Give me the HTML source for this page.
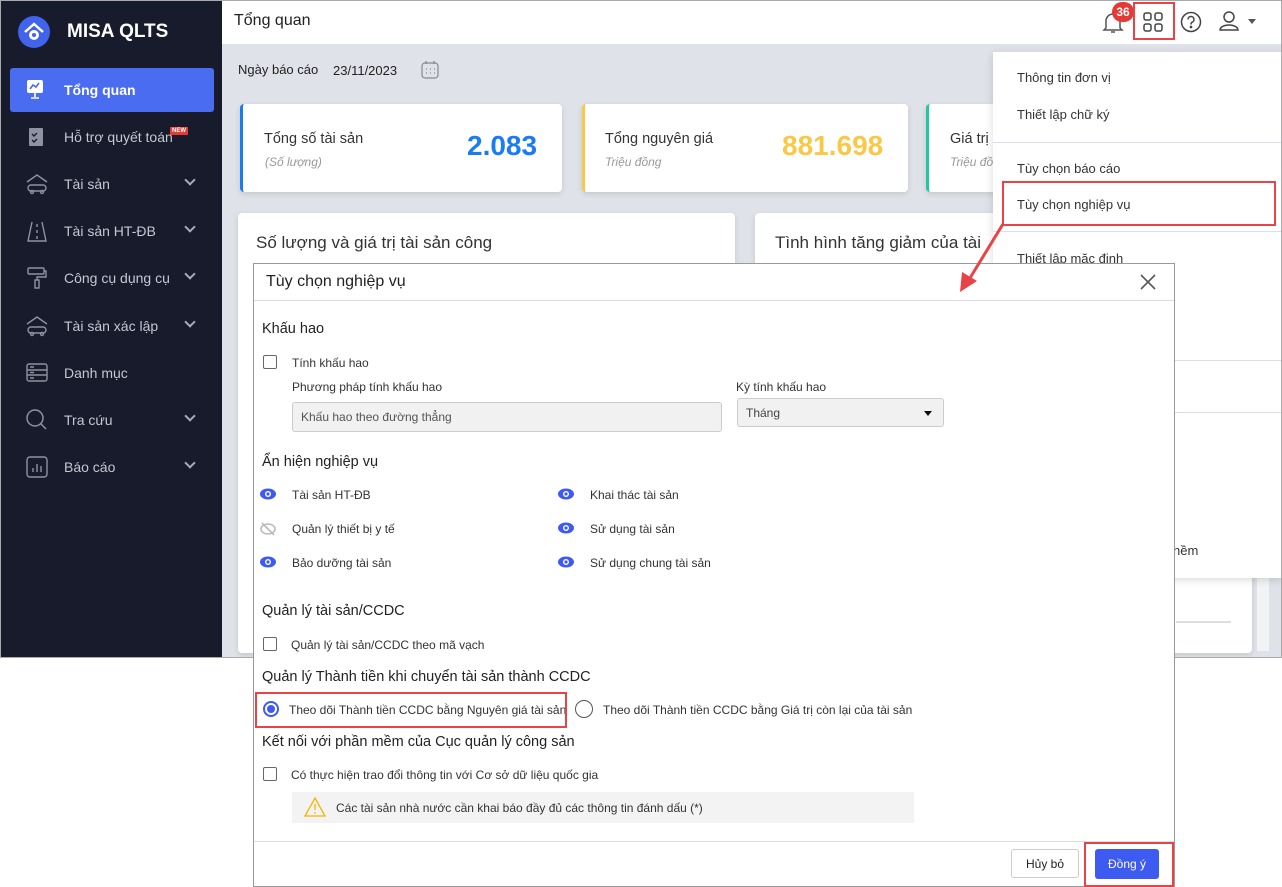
<!DOCTYPE html>
<html><head><meta charset="utf-8"><style>
*{box-sizing:border-box;margin:0;padding:0}
body{width:1282px;height:887px;background:#fff;font-family:"Liberation Sans",sans-serif;position:relative;overflow:hidden;color:#222}
.a{position:absolute}
#frame{left:0;top:0;width:1282px;height:658px;border:1px solid #aaa;background:#dfe2e8;overflow:hidden}
#side{left:0;top:0;width:221px;height:657px;background:#171b2b}
.ni{position:absolute;left:9px;width:204px;height:44px;color:#c5c8d0;font-size:14px}
.ni span{position:absolute;left:54px;top:14px}
.ni svg{position:absolute;left:15px;top:10px}
.ni .chev{position:absolute;left:176px;top:14px;width:8px;height:8px;border-right:2px solid #aab;border-bottom:2px solid #aab;transform:rotate(45deg)}
.card{background:#fff;border-radius:4px;box-shadow:0 2px 6px rgba(0,0,0,.12)}
.mi{position:absolute;left:24px;font-size:13px;color:#333}
.sep{position:absolute;left:0;width:290px;height:1px;background:#dde}
.dlg{left:253px;top:263px;width:922px;height:624px;background:#fff;border:1px solid #999}
.h{position:absolute;left:8px;font-size:14.5px;color:#222}
.t{position:absolute;font-size:12px;color:#333}
.cb{position:absolute;width:14px;height:14px;border:1px solid #666;border-radius:2px;background:#fff}
.red{position:absolute;border:2px solid #e84347}
</style></head><body>
<div id="frame" class="a">
 <div id="side" class="a">
  <svg class="a" style="left:16px;top:14px" width="34" height="34" viewBox="0 0 34 34"><circle cx="17" cy="17" r="16" fill="#4263eb"/><path d="M8 17 L17 9 L26 17" stroke="#fff" stroke-width="2.5" fill="none"/><circle cx="17" cy="20" r="5" fill="#fff"/><circle cx="17" cy="20" r="2" fill="#4263eb"/></svg>
  <div class="a" style="left:66px;top:20px;color:#fff;font-weight:bold;font-size:19px">MISA QLTS</div>
  <div class="ni" style="top:67px;background:#4a6cf0;border-radius:3px;color:#fff;font-weight:bold"><svg width="22" height="22" viewBox="0 0 22 22"><rect x="2" y="2" width="16" height="13" rx="2" fill="#fff"/><path d="M5 11 L8 7 L11 9 L14 5" stroke="#4a6cf0" stroke-width="1.6" fill="none"/><path d="M10 15v4M6 20h8" stroke="#fff" stroke-width="1.6"/></svg><span>Tổng quan</span></div>
  <div class="ni" style="top:114px"><svg width="22" height="22" viewBox="0 0 22 22"><rect x="4" y="3" width="14" height="18" rx="1" fill="#8d93a0"/><path d="M7 9l2 2 3-3M7 15l2 2 3-3" stroke="#171b2b" stroke-width="1.4" fill="none"/></svg><span>Hỗ trợ quyết toán</span><div class="a" style="left:160px;top:12px;background:#e53935;color:#fff;font-size:6px;padding:1px 2px;font-weight:bold">NEW</div></div>
  <div class="ni" style="top:161px"><svg width="24" height="24" viewBox="0 0 24 24" fill="none" stroke="#8d93a0" stroke-width="1.4"><path d="M2 10 L12 3 L22 10"/><rect x="3" y="13" width="18" height="6" rx="3"/><circle cx="7" cy="20" r="1.5"/><circle cx="17" cy="20" r="1.5"/></svg><span>Tài sản</span><i class="chev"></i></div>
  <div class="ni" style="top:208px"><svg width="24" height="24" viewBox="0 0 24 24" fill="none" stroke="#8d93a0" stroke-width="1.4"><path d="M7 3 L3 22 H21 L17 3M12 5v3M12 11v3M12 17v3"/></svg><span>Tài sản HT-ĐB</span><i class="chev"></i></div>
  <div class="ni" style="top:255px"><svg width="24" height="24" viewBox="0 0 24 24" fill="none" stroke="#8d93a0" stroke-width="1.4"><rect x="3" y="2" width="16" height="6" rx="1"/><path d="M19 5h2v6h-9v3"/><rect x="10" y="14" width="4" height="8"/></svg><span>Công cụ dụng cụ</span><i class="chev"></i></div>
  <div class="ni" style="top:303px"><svg width="24" height="24" viewBox="0 0 24 24" fill="none" stroke="#8d93a0" stroke-width="1.4"><path d="M2 10 L12 3 L22 10"/><rect x="3" y="13" width="18" height="6" rx="3"/><circle cx="7" cy="20" r="1.5"/><circle cx="17" cy="20" r="1.5"/></svg><span>Tài sản xác lập</span><i class="chev"></i></div>
  <div class="ni" style="top:350px"><svg width="24" height="24" viewBox="0 0 24 24" fill="none" stroke="#8d93a0" stroke-width="1.4"><rect x="2" y="3" width="20" height="17" rx="2"/><path d="M2 9h20M2 14h20M5 6h4M5 11.5h4M5 17h4"/></svg><span>Danh mục</span></div>
  <div class="ni" style="top:397px"><svg width="24" height="24" viewBox="0 0 24 24" fill="none" stroke="#8d93a0" stroke-width="1.5"><circle cx="10" cy="10" r="8"/><path d="M16 16l5 5"/></svg><span>Tra cứu</span><i class="chev"></i></div>
  <div class="ni" style="top:444px"><svg width="24" height="24" viewBox="0 0 24 24" fill="none" stroke="#8d93a0" stroke-width="1.4"><rect x="2" y="2" width="20" height="20" rx="3"/><path d="M8 17v-4M12 17v-8M16 17v-6"/></svg><span>Báo cáo</span><i class="chev"></i></div>
 </div>
 <div class="a" style="left:221px;top:0;width:1060px;height:43px;background:#fff"></div>
 <div class="a" style="left:233px;top:11px;font-size:16px;color:#222">Tổng quan</div>
 <svg class="a" style="left:1101px;top:10px" width="22" height="24" viewBox="0 0 22 24" fill="none" stroke="#555" stroke-width="1.5"><path d="M4 17V10a7 7 0 0 1 14 0v7l2 2H2z M9 21h4"/></svg>
 <div class="a" style="left:1111px;top:1px;width:22px;height:20px;border-radius:10px;background:#e53935;color:#fff;font-size:12px;font-weight:bold;text-align:center;line-height:20px">36</div>
 <svg class="a" style="left:1142px;top:11px" width="20" height="20" viewBox="0 0 20 20" fill="none" stroke="#444" stroke-width="1.5"><rect x="1" y="1" width="7" height="7" rx="2"/><rect x="12" y="1" width="7" height="7" rx="2"/><rect x="1" y="12" width="7" height="7" rx="2"/><rect x="12" y="12" width="7" height="7" rx="2"/></svg>
 <div class="red" style="left:1132px;top:1px;width:42px;height:38px"></div>
 <svg class="a" style="left:1179px;top:10px" width="22" height="22" viewBox="0 0 22 22" fill="none" stroke="#444" stroke-width="1.5"><circle cx="11" cy="11" r="9.5"/><path d="M8 8.5a3 3 0 1 1 4 2.8c-1 .4-1 1-1 2.2"/><circle cx="11" cy="16" r=".6" fill="#444"/></svg>
 <svg class="a" style="left:1217px;top:9px" width="22" height="22" viewBox="0 0 22 22" fill="none" stroke="#444" stroke-width="1.5"><circle cx="11" cy="7" r="5"/><path d="M2 20a9 5 0 0 1 18 0z"/></svg>
 <div class="a" style="left:1247px;top:18px;border:4px solid transparent;border-top:5px solid #555"></div>
 <div class="a" style="left:237px;top:61px;font-size:13px">Ngày báo cáo</div>
 <div class="a" style="left:332px;top:62px;font-size:13px">23/11/2023</div>
 <svg class="a" style="left:419px;top:59px" width="20" height="20" viewBox="0 0 20 20" fill="none" stroke="#888" stroke-width="1.2"><rect x="2" y="3" width="16" height="15" rx="3"/><path d="M6 1v3M14 1v3M6 9h1M10 9h1M14 9h1M6 13h1M10 13h1M14 13h1"/></svg>
 <div class="a card" style="left:239px;top:103px;width:322px;height:88px;border-left:3px solid #1a7cf5"></div>
 <div class="a" style="left:263px;top:130px;font-size:14.5px;color:#333">Tổng số tài sản</div>
 <div class="a" style="left:264px;top:154px;font-size:12px;color:#999;font-style:italic">(Số lượng)</div>
 <div class="a" style="left:466px;top:129px;font-size:28px;font-weight:bold;color:#1a7cf5">2.083</div>
 <div class="a card" style="left:581px;top:103px;width:326px;height:88px;border-left:3px solid #f9c847"></div>
 <div class="a" style="left:604px;top:130px;font-size:14.5px;color:#333">Tổng nguyên giá</div>
 <div class="a" style="left:604px;top:154px;font-size:12px;color:#999;font-style:italic">Triệu đồng</div>
 <div class="a" style="left:781px;top:129px;font-size:28px;font-weight:bold;color:#f9c847">881.698</div>
 <div class="a card" style="left:925px;top:103px;width:200px;height:88px;border-left:3px solid #1ec8a0"></div>
 <div class="a" style="left:949px;top:130px;font-size:14.5px;color:#333">Giá trị</div>
 <div class="a" style="left:949px;top:154px;font-size:12px;color:#999;font-style:italic">Triệu đồ</div>
 <div class="a card" style="left:237px;top:212px;width:497px;height:440px"></div>
 <div class="a" style="left:255px;top:232px;font-size:17px;color:#333">Số lượng và giá trị tài sản công</div>
 <div class="a card" style="left:754px;top:212px;width:497px;height:440px"></div>
 <div class="a" style="left:774px;top:232px;font-size:17px;color:#333">Tình hình tăng giảm của tài</div>
 <div class="a" style="left:1175px;top:620px;width:55px;height:2px;background:#ddd"></div>
 <div class="a" style="left:1256px;top:230px;width:12px;height:420px;background:#f2f3f5"></div>
 <div class="a" style="left:992px;top:51px;width:290px;height:526px;background:#fff;box-shadow:0 2px 8px rgba(0,0,0,.15)">
  <div class="mi" style="top:18px">Thông tin đơn vị</div>
  <div class="mi" style="top:55px">Thiết lập chữ ký</div>
  <div class="sep" style="top:90px"></div>
  <div class="sep" style="top:179px"></div>
  <div class="mi" style="top:109px">Tùy chọn báo cáo</div>
  <div class="mi" style="top:145px">Tùy chọn nghiệp vụ</div>
  <div class="mi" style="top:199px">Thiết lập mặc định</div>
  <div class="sep" style="top:308px"></div>
  <div class="sep" style="top:360px"></div>
  <div class="mi" style="top:491px;left:180px">hềm</div>
 </div>
 <div class="red" style="left:1001px;top:180px;width:274px;height:45px"></div>
</div>
<div class="a dlg">
 <div class="a" style="left:12px;top:9px;font-size:16px;color:#222">Tùy chọn nghiệp vụ</div>
 <svg class="a" style="left:886px;top:10px" width="16" height="16" viewBox="0 0 16 16" stroke="#555" stroke-width="1.6"><path d="M1 1L15 15M15 1L1 15"/></svg>
 <div class="a" style="left:0;top:36px;width:920px;height:1px;background:#ddd"></div>
 <div class="h" style="top:57px">Khấu hao</div>
 <div class="cb" style="left:9px;top:91px"></div><div class="t" style="left:38px;top:92px">Tính khấu hao</div>
 <div class="t" style="left:38px;top:116px">Phương pháp tính khấu hao</div>
 <div class="a" style="left:38px;top:138px;width:430px;height:30px;background:#f1f1f1;border:1px solid #ccc;border-radius:3px;font-size:12px;color:#555;padding:7px 8px">Khấu hao theo đường thẳng</div>
 <div class="t" style="left:482px;top:116px">Kỳ tính khấu hao</div>
 <div class="a" style="left:483px;top:134px;width:207px;height:29px;background:#f1f1f1;border:1px solid #ccc;border-radius:3px;font-size:12px;color:#444;padding:7px 8px">Tháng</div>
 <div class="a" style="left:670px;top:147px;border:4px solid transparent;border-top:5px solid #111"></div>
 <div class="h" style="top:190px">Ẩn hiện nghiệp vụ</div>
 <svg width="0" height="0" style="position:absolute"><defs><g id="eye"><ellipse cx="8" cy="6" rx="8" ry="5.5" fill="#3d5af1"/><circle cx="8" cy="6" r="3" fill="#fff"/><circle cx="8" cy="6" r="1.6" fill="#3d5af1"/></g></defs></svg>
 <svg class="a" style="left:6px;top:224px" width="16" height="12"><use href="#eye"/></svg><div class="t" style="left:38px;top:224px">Tài sản HT-ĐB</div>
 <svg class="a" style="left:6px;top:258px" width="16" height="14" viewBox="0 0 16 14" fill="none" stroke="#bbb" stroke-width="1.6"><ellipse cx="8" cy="7" rx="7" ry="5"/><path d="M2 1L14 13"/></svg><div class="t" style="left:38px;top:258px">Quản lý thiết bị y tế</div>
 <svg class="a" style="left:6px;top:292px" width="16" height="12"><use href="#eye"/></svg><div class="t" style="left:38px;top:292px">Bảo dưỡng tài sản</div>
 <svg class="a" style="left:304px;top:224px" width="16" height="12"><use href="#eye"/></svg><div class="t" style="left:336px;top:224px">Khai thác tài sản</div>
 <svg class="a" style="left:304px;top:258px" width="16" height="12"><use href="#eye"/></svg><div class="t" style="left:336px;top:258px">Sử dụng tài sản</div>
 <svg class="a" style="left:304px;top:292px" width="16" height="12"><use href="#eye"/></svg><div class="t" style="left:336px;top:292px">Sử dụng chung tài sản</div>
 <div class="h" style="top:339px">Quản lý tài sản/CCDC</div>
 <div class="cb" style="left:9px;top:373px"></div><div class="t" style="left:37px;top:374px">Quản lý tài sản/CCDC theo mã vạch</div>
 <div class="h" style="top:405px">Quản lý Thành tiền khi chuyển tài sản thành CCDC</div>
 <div class="a" style="left:9px;top:437px;width:16px;height:16px;border-radius:50%;border:2px solid #3d5af1"><div class="a" style="left:2px;top:2px;width:8px;height:8px;border-radius:50%;background:#3d5af1"></div></div>
 <div class="t" style="left:35px;top:439px">Theo dõi Thành tiền CCDC bằng Nguyên giá tài sản</div>
 <div class="red" style="left:1px;top:428px;width:312px;height:36px"></div>
 <div class="a" style="left:321px;top:436px;width:18px;height:18px;border-radius:50%;border:1.5px solid #555"></div>
 <div class="t" style="left:349px;top:439px">Theo dõi Thành tiền CCDC bằng Giá trị còn lại của tài sản</div>
 <div class="h" style="top:470px">Kết nối với phần mềm của Cục quản lý công sản</div>
 <div class="cb" style="left:9px;top:503px"></div><div class="t" style="left:37px;top:504px">Có thực hiện trao đổi thông tin với Cơ sở dữ liệu quốc gia</div>
 <div class="a" style="left:38px;top:528px;width:622px;height:31px;background:#f3f3f3"></div>
 <svg class="a" style="left:50px;top:533px" width="22" height="20" viewBox="0 0 22 20" fill="none" stroke="#f5b400" stroke-width="1.3"><path d="M11 1L21 19H1z"/><path d="M11 7v6M11 15v1.5"/></svg>
 <div class="t" style="left:82px;top:537px">Các tài sản nhà nước cần khai báo đầy đủ các thông tin đánh dấu (*)</div>
 <div class="a" style="left:0;top:577px;width:920px;height:1px;background:#ddd"></div>
 <div class="a" style="left:757px;top:585px;width:68px;height:29px;border:1px solid #ccc;border-radius:3px;font-size:12px;padding-top:7px;text-align:center">Hủy bỏ</div>
 <div class="a" style="left:841px;top:585px;width:64px;height:30px;background:#3d5af1;border-radius:3px;color:#fff;font-size:12px;text-align:center;padding-top:8px">Đồng ý</div>
 <div class="red" style="left:830px;top:578px;width:90px;height:45px"></div>
</div>
<svg class="a" style="left:950px;top:222px;z-index:5" width="60" height="75" viewBox="0 0 60 75"><path d="M53 2 L20 56" stroke="#e84347" stroke-width="3"/><path d="M10 70 L12 50 L27 59z" fill="#e84347"/></svg>
</body></html>
